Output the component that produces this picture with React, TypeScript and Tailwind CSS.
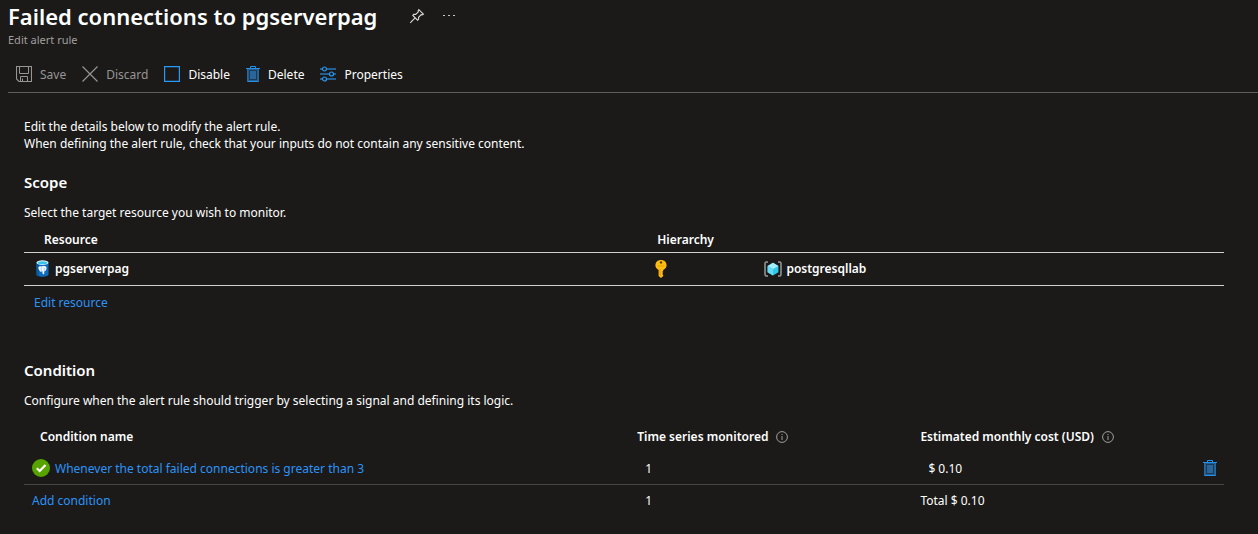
import type { ReactNode } from "react";

function PinIcon() {
  return (
    <svg width="16" height="16" viewBox="0 0 16 16" fill="none" stroke="#dddbd9" strokeWidth="1.1" aria-hidden="true">
      <path d="M9.8 1.6 14.4 6.2 13.2 6.9 12.2 6.7 9.6 9.3 9.6 11.3 8.6 12.2 3.8 7.4 4.7 6.4 6.7 6.4 9.3 3.8 9.1 2.8Z" />
      <path d="M6.1 9.9 1.2 14.8" />
    </svg>
  );
}

function SaveIcon() {
  return (
    <svg width="16" height="16" viewBox="0 0 16 16" fill="none" stroke="#979593" aria-hidden="true">
      <path d="M.5.5h15v15H3L.5 13Z" strokeWidth="1.1" />
      <path d="M3.5.5v7h9v-7M4.5 15.5v-5h7v5M6.5 12.5v3" />
    </svg>
  );
}

function DiscardIcon() {
  return (
    <svg width="16" height="16" viewBox="0 0 16 16" fill="none" stroke="#979593" strokeWidth="1.2" aria-hidden="true">
      <path d="M.5.5l15 15M15.5.5l-15 15" />
    </svg>
  );
}

function DisableIcon() {
  return (
    <svg width="16" height="16" viewBox="0 0 16 16" fill="none" stroke="#2899f5" aria-hidden="true">
      <path d="M.6.6h14.8v14.8H.6Z" strokeWidth="1.2" />
    </svg>
  );
}

function TrashIcon() {
  return (
    <svg width="14" height="16" viewBox="0 0 14 16" fill="none" aria-hidden="true">
      <path d="M1 3h12v13H1Z" fill="#235e92" />
      <path d="M3 4h8v10H3Z" fill="#1c3a56" />
      <path d="M4 5h6v8H4Z" fill="#2b669a" />
      <path d="M0 2.5h14M4.5 2V.5h5V2M1.5 15.5h11" stroke="#2590e8" />
      <path d="M1.5 3v12.5M12.5 3v12.5" stroke="#246ba6" />
    </svg>
  );
}

function PropertiesIcon() {
  return (
    <svg width="16" height="16" viewBox="0 0 16 16" fill="none" aria-hidden="true">
      <path d="M0 3h2M7 3h9M0 8h9M14 8h2M0 13h2M7 13h9" stroke="#245f91" strokeWidth="2" />
      <g stroke="#2899f5" strokeWidth="1.2">
        <circle cx="4.5" cy="3" r="2" />
        <circle cx="11.5" cy="8" r="2" />
        <circle cx="4.5" cy="13" r="2" />
      </g>
    </svg>
  );
}

function DatabaseIcon() {
  return (
    <svg width="13" height="17" viewBox="0 0 13 17" aria-hidden="true">
      <path d="M.5 2.5v12c0 1.2 2.7 2.2 6 2.2s6-1 6-2.2v-12Z" fill="#0f6cbd" />
      <path d="M.5 2.5v12c0 1 1 1.6 2.5 1.9V3Z" fill="#075a9f" />
      <ellipse cx="6.5" cy="2.6" rx="6" ry="2.3" fill="#e8f6fb" />
      <ellipse cx="6.5" cy="2.7" rx="4.7" ry="1.5" fill="#35c5e8" />
      <path d="M2.4 7c1-1.1 2.5-.8 3.300-.5 1.4-.6 3.9-.6 4.7.7.5 1.1-.2 2.500-.9 3.500L8.200 11.500v2.400c-.5.6-1.500.4-1.600-.3l-.4-2.500-1.300.8c-1.500-.9-2.900-3.500-2.500-4.900Z" fill="#f4f9fd" />
      <path d="M5.4 7.200c-.4 1.500-.3 2.700 0 3.900M8 7.400c.4 1.300.4 2.300.1 3.400" stroke="#6ba5d5" strokeWidth=".5" fill="none" />
    </svg>
  );
}

function KeyIcon() {
  return (
    <svg width="12" height="18" viewBox="0 0 12 18" aria-hidden="true">
      <path d="M6 0C2.600 0 .4 2.200.4 5.300c0 2.200 1.300 3.500 3.200 4.700v6l2.400 2 2.200-2v-1l-1-1 1-1-1-1 1-1v-1c2-1.200 3.400-2.500 3.400-4.700C11.600 2.200 9.400 0 6 0Z" fill="#fdbe12" />
      <path d="M2.500 5.500h7v1h-7ZM4.500 9h1.200v7.500l-1.200-1Z" fill="#ee9a0c" />
      <circle cx="6" cy="2.4" r="1.2" fill="#5b3a0a" />
    </svg>
  );
}

function ResourceGroupIcon() {
  return (
    <svg width="18" height="16" viewBox="0 0 18 16" aria-hidden="true">
      <path d="M4 1H2.500Q1 1 1 2.500v11Q1 15 2.500 15H4M14 1h1.500Q17 1 17 2.500v11q0 1.500-1.500 1.500H14" fill="none" stroke="#96989a" strokeWidth="1.5" />
      <path d="M9 1.800 14.400 5v6.200L9 14.400 3.600 11.200V5Z" fill="#32c8ea" />
      <path d="M9 1.800l5.400 3.200L9 8 3.600 5Z" fill="#a5edfa" />
      <path d="M3.600 5 9 8v6.400l-5.400-3.200Z" fill="#65dcf3" />
    </svg>
  );
}

function CheckIcon() {
  return (
    <svg width="18" height="18" viewBox="0 0 18 18" aria-hidden="true">
      <circle cx="9" cy="9" r="9" fill="#57a300" />
      <path d="M4.8 9.2 7.7 12 13.5 6" fill="none" stroke="#fff" strokeWidth="2.2" />
    </svg>
  );
}

function InfoIcon() {
  return (
    <svg width="12" height="12" viewBox="0 0 12 12" fill="none" aria-hidden="true">
      <circle cx="6" cy="6" r="5.4" stroke="#a19f9d" />
      <path d="M6 5v4M6 3v1" stroke="#a19f9d" />
    </svg>
  );
}

function Command({ icon, label, disabled }: { icon: ReactNode; label: string; disabled?: boolean }) {
  return (
    <button type="button" disabled={disabled} className="flex items-center gap-2 text-white disabled:text-[#979593]">
      {icon}
      {label}
    </button>
  );
}

function HeaderWithInfo({ label }: { label: string }) {
  return (
    <div className="flex items-center gap-2">
      {label}
      <button type="button" aria-label={"About " + label.toLowerCase()}>
        <InfoIcon />
      </button>
    </div>
  );
}

export default function App() {
  return (
    <div className="min-h-screen bg-[#1b1a19] font-['Noto_Sans','Open_Sans',sans-serif] text-xs leading-[17px] text-white">
      <header className="pl-2">
        <div className="flex h-8 items-center">
          <h1 className="text-[22px] font-semibold leading-8">Failed connections to pgserverpag</h1>
          <button type="button" aria-label="Pin" className="ml-8">
            <PinIcon />
          </button>
          <button type="button" aria-label="More" className="ml-4 flex h-4 w-4 items-center justify-center">
            <svg width="12" height="2" viewBox="0 0 12 2" fill="#c8c6c4" aria-hidden="true">
              <path d="M0 0h2v1H0ZM5 0h2v1H5ZM10 0h2v1h-2Z" />
            </svg>
          </button>
        </div>
        <p className="text-[11px] leading-4 text-[#a19f9d]">Edit alert rule</p>
        <div className="mt-2 flex h-[37px] items-center gap-4 border-b border-[#605e5c] pl-2">
          <Command icon={<SaveIcon />} label="Save" disabled />
          <Command icon={<DiscardIcon />} label="Discard" disabled />
          <Command icon={<DisableIcon />} label="Disable" />
          <Command icon={<TrashIcon />} label="Delete" />
          <Command icon={<PropertiesIcon />} label="Properties" />
        </div>
      </header>

      <main className="pl-6 pr-[34px] pt-[25px]">
        <p>Edit the details below to modify the alert rule.</p>
        <p>When defining the alert rule, check that your inputs do not contain any sensitive content.</p>

        <section className="pt-5">
          <h2 className="text-[15px] font-semibold leading-5">Scope</h2>
          <p className="mt-3">Select the target resource you wish to monitor.</p>
          <table className="mt-1.5 w-full table-fixed text-left">
            <colgroup>
              <col className="w-[52.6%]" />
              <col className="w-[9.1%]" />
              <col />
            </colgroup>
            <thead>
              <tr className="h-[25px] border-b border-[#d2d0ce]">
                <th className="pl-5 font-semibold">Resource</th>
                <th colSpan={2} className="pl-0.5 font-semibold">Hierarchy</th>
              </tr>
            </thead>
            <tbody>
              <tr className="h-[33px] border-b border-[#d2d0ce] font-semibold">
                <td className="pl-3">
                  <div className="flex items-center gap-1.5">
                    <DatabaseIcon />
                    pgserverpag
                  </div>
                </td>
                <td>
                  <KeyIcon />
                </td>
                <td>
                  <div className="flex items-center gap-1">
                    <ResourceGroupIcon />
                    postgresqllab
                  </div>
                </td>
              </tr>
            </tbody>
          </table>
          <a href="#resource" className="ml-2.5 mt-2 inline-block text-[#2b93f8]">Edit resource</a>
        </section>

        <section className="pt-[49px]">
          <h2 className="text-[15px] font-semibold leading-5">Condition</h2>
          <p className="mt-3">Configure when the alert rule should trigger by selecting a signal and defining its logic.</p>
          <table className="mt-3 w-full table-fixed text-left">
            <colgroup>
              <col className="w-[51.1%]" />
              <col className="w-[23.6%]" />
              <col />
              <col className="w-7" />
            </colgroup>
            <thead>
              <tr className="h-8">
                <th className="pl-4 font-semibold">Condition name</th>
                <th className="font-semibold">
                  <HeaderWithInfo label="Time series monitored" />
                </th>
                <th className="font-semibold">
                  <HeaderWithInfo label="Estimated monthly cost (USD)" />
                </th>
                <td />
              </tr>
            </thead>
            <tbody>
              <tr className="h-8 border-b border-[#484644]">
                <td className="pl-2">
                  <a href="#condition" className="flex items-center gap-[5px] text-[#2b93f8]">
                    <CheckIcon />
                    Whenever the total failed connections is greater than 3
                  </a>
                </td>
                <td className="pl-2">1</td>
                <td className="pl-2">$ 0.10</td>
                <td className="pl-[7px]">
                  <button type="button" aria-label="Delete condition" className="block">
                    <TrashIcon />
                  </button>
                </td>
              </tr>
              <tr className="h-8">
                <td className="pl-2">
                  <a href="#add" className="text-[#2b93f8]">Add condition</a>
                </td>
                <td className="pl-2">1</td>
                <td>Total $ 0.10</td>
                <td />
              </tr>
            </tbody>
          </table>
        </section>
      </main>
    </div>
  );
}
